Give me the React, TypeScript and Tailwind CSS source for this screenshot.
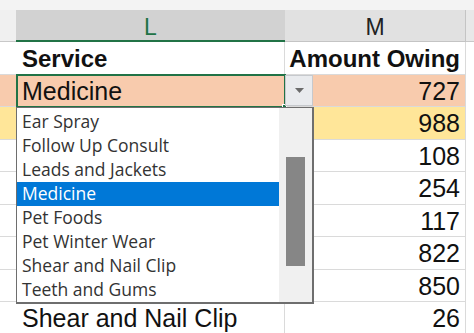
import React from "react";

type Row = {
  service: string;
  amount: string;
  kFill: string;
  fill: string;
  bold?: boolean;
};

const rows: Row[] = [
  { service: "Service", amount: "Amount Owing", kFill: "bg-white", fill: "bg-white", bold: true },
  { service: "Medicine", amount: "727", kFill: "bg-[#f8cbad]", fill: "bg-[#f8cbad]" },
  { service: "", amount: "988", kFill: "bg-[#ffe699]", fill: "bg-[#ffe699]" },
  { service: "", amount: "108", kFill: "bg-white", fill: "bg-white" },
  { service: "", amount: "254", kFill: "bg-white", fill: "bg-white" },
  { service: "", amount: "117", kFill: "bg-white", fill: "bg-white" },
  { service: "", amount: "822", kFill: "bg-white", fill: "bg-white" },
  { service: "", amount: "850", kFill: "bg-white", fill: "bg-white" },
  { service: "Shear and Nail Clip", amount: "26", kFill: "bg-white", fill: "bg-white" },
];

const options = [
  "Ear Spray",
  "Follow Up Consult",
  "Leads and Jackets",
  "Medicine",
  "Pet Foods",
  "Pet Winter Wear",
  "Shear and Nail Clip",
  "Teeth and Gums",
];

export default function App() {
  return (
    <div className="relative w-[474px] h-[333px] overflow-hidden bg-white font-['Liberation_Sans',Arial,sans-serif] text-[#111]">
      <div className="h-[10px] bg-[#f3f3f3]" />

      {/* column headers */}
      <div className="flex h-[32px]">
        <div className="w-[16px] bg-[#f0f0f0] border-b border-[#c8c8c8]" />
        <div className="w-[269px] flex items-center justify-center pt-[4px] bg-[#d2d2d2] border-b-2 border-[#217346] text-[23px] text-[#217346]">
          L
        </div>
        <div className="w-[181px] flex items-center justify-center pt-[4px] bg-[#e1e1e1] border-b border-r border-[#c4c4c4] text-[23px] text-[#222]">
          M
        </div>
        <div className="flex-1 bg-[#e8e8e8] border-b border-[#c8c8c8]" />
      </div>

      {rows.map((r, i) => (
        <div key={i} className="flex h-[32.5px]">
          <div className={`w-[16px] border-b border-[#dadada] ${r.kFill}`} />
          <div
            className={`w-[269px] flex items-center pl-[6px] pt-[2px] leading-none border-b border-r border-[#dadada] whitespace-nowrap ${r.fill} ${r.bold ? "font-bold text-[24px]" : "text-[25px]"}`}
          >
            {r.service}
          </div>
          <div
            className={`w-[181px] flex items-center justify-end pr-[5px] pt-[2px] leading-none border-b border-r border-[#dadada] whitespace-nowrap ${r.fill} ${r.bold ? "font-bold text-[24px]" : "text-[25px]"}`}
          >
            {r.amount}
          </div>
          <div className="flex-1 bg-white" />
        </div>
      ))}

      {/* selected cell border */}
      <div className="absolute left-[16px] top-[74px] w-[270px] h-[34px] border-2 border-[#217346]" />
      <div className="absolute left-[282px] top-[104px] w-[5px] h-[5px] bg-[#217346] border border-white" />

      {/* dropdown button */}
      <div className="absolute left-[285px] top-[75px] w-[28px] h-[31px] flex items-center justify-center bg-[#e9ebee] border border-[#c6c9cd]">
        <svg width="9" height="5" viewBox="0 0 9 5">
          <path d="M0 0H9L4.5 5Z" fill="#6b6b6b" />
        </svg>
      </div>

      {/* dropdown list */}
      <div className="absolute left-[16px] top-[107px] w-[298px] h-[197px] flex bg-white border border-[#6e6e6e] border-r-2 border-b-2 font-['Open_Sans',sans-serif] text-[17.5px] text-[#333]">
        <div className="flex-1 flex flex-col pt-[2px]">
          {options.map((o) => (
            <div
              key={o}
              className={`h-[24.2px] flex items-center pl-[5px] leading-none ${o === "Medicine" ? "bg-[#0078d7] text-white" : ""}`}
            >
              {o}
            </div>
          ))}
        </div>
        <div className="w-[33px] bg-[#f0f0f0] flex flex-col items-center pt-[49px]">
          <div className="w-[19px] h-[109px] bg-[#868686]" />
        </div>
      </div>
    </div>
  );
}
